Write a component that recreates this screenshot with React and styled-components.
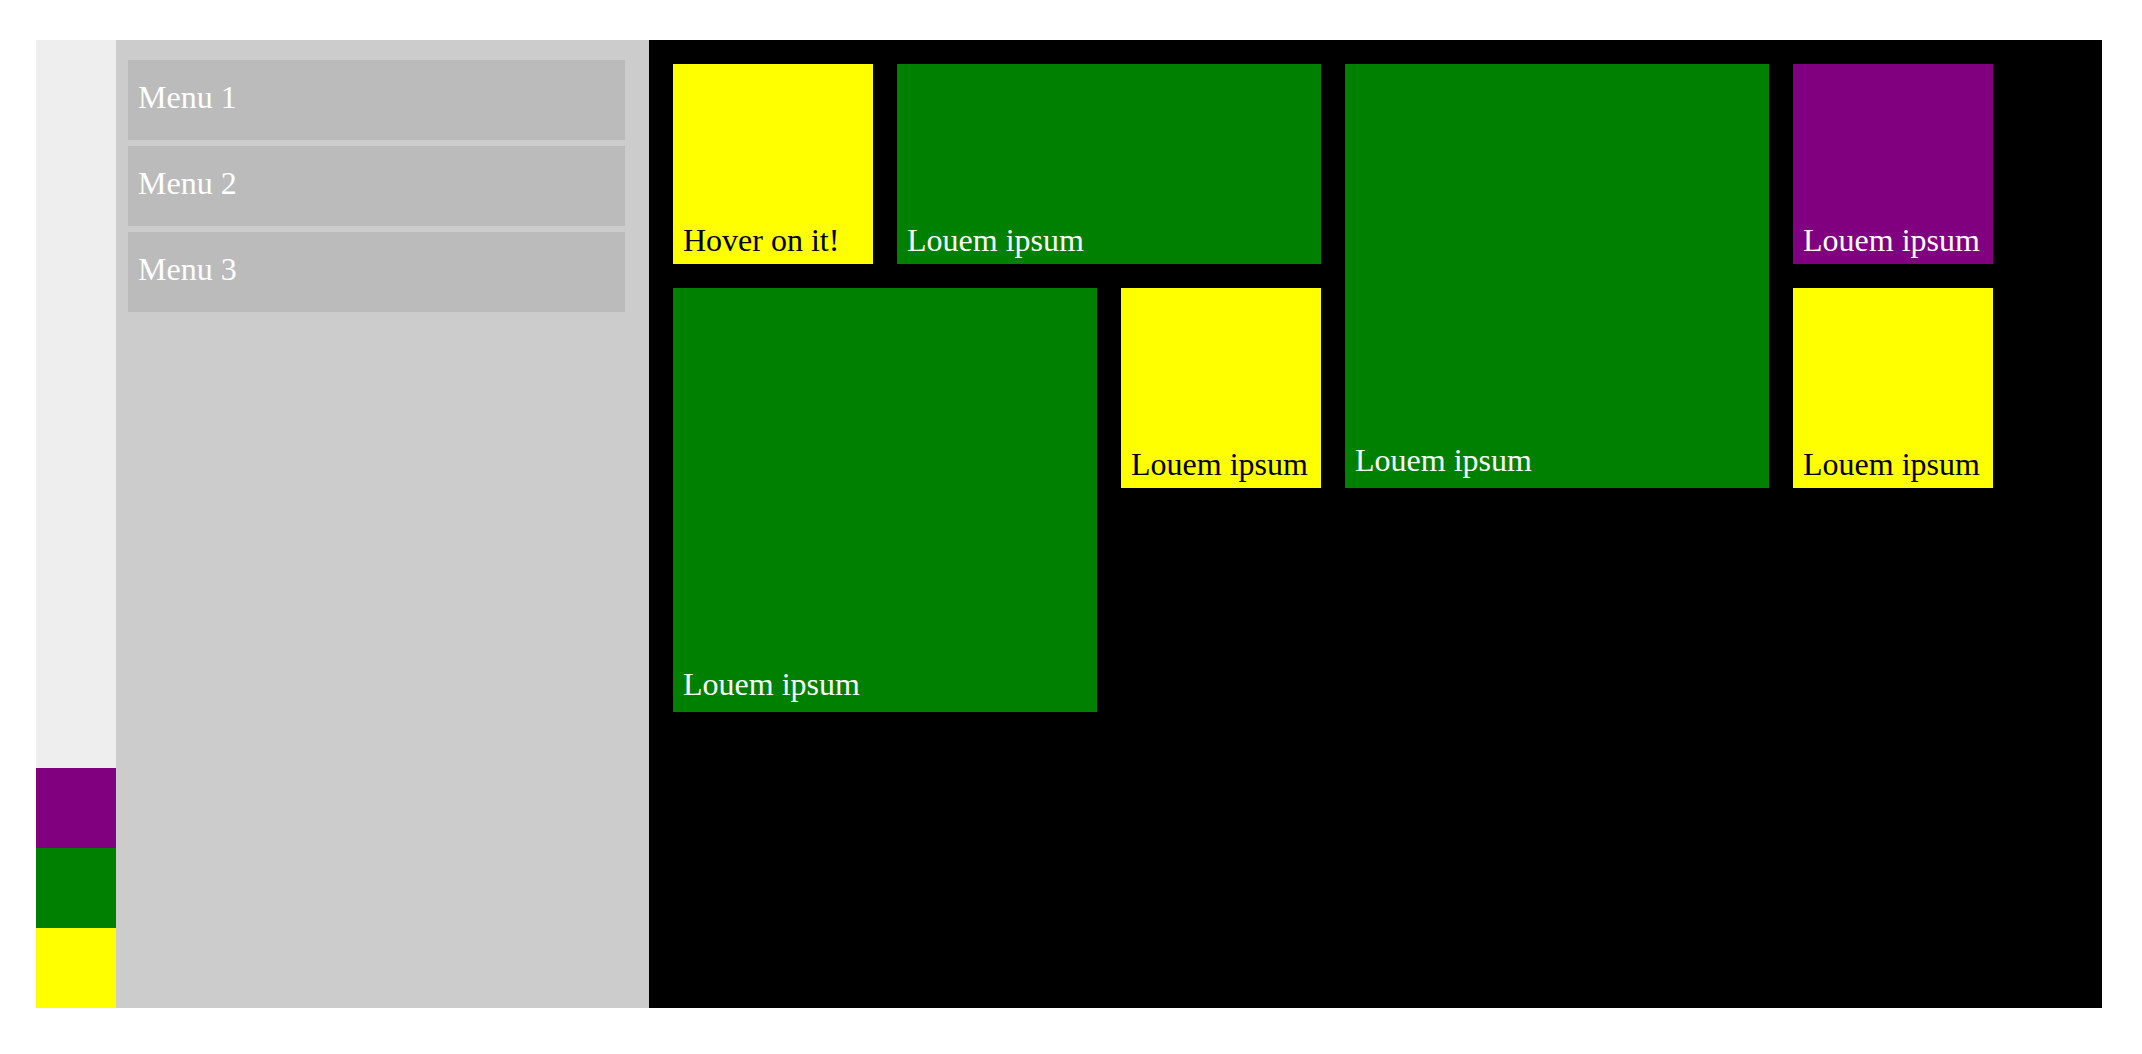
import React from 'react';
import styled, { createGlobalStyle } from 'styled-components';

const GlobalStyle = createGlobalStyle`
  html, body {
    margin: 0;
    padding: 0;
    background: #fff;
  }

  body {
    font-family: "Liberation Serif", "Times New Roman", serif;
  }
`;

const Page = styled.div`
  padding: 40px 40px 46px 36px;
`;

const Layout = styled.div`
  display: flex;
  height: 968px;
`;

const Strip = styled.div`
  width: 80px;
  flex-shrink: 0;
  background: #eee;
  display: flex;
  flex-direction: column;
  justify-content: flex-end;
`;

const Swatch = styled.div`
  width: 80px;
  height: 80px;
  background: ${(p) => p.$color};
`;

const Menu = styled.nav`
  width: 533px;
  flex-shrink: 0;
  box-sizing: border-box;
  padding: 20px 24px 0 12px;
  background: #ccc;
  display: flex;
  flex-direction: column;
  gap: 6px;
`;

const MenuItem = styled.div`
  height: 80px;
  box-sizing: border-box;
  padding: 19px 10px 0;
  background: #bbb;
  color: #fff;
  font-size: 32px;
`;

const Board = styled.main`
  flex: 1;
  background: #000;
  padding: 24px;
  display: grid;
  grid-template-columns: repeat(6, 200px);
  grid-auto-rows: 200px;
  gap: 24px;
  align-content: start;
`;

const Tile = styled.div`
  grid-column: span ${(p) => p.$cols || 1};
  grid-row: span ${(p) => p.$rows || 1};
  background: ${(p) => p.$color};
  color: ${(p) => (p.$color === 'yellow' ? '#000' : '#fff')};
  display: flex;
  flex-direction: column;
  justify-content: flex-end;
  padding: 0 10px ${(p) => (p.$rows === 2 ? 9 : 5)}px;
  font-size: 32px;
  white-space: nowrap;
`;

const tiles = [
  { color: 'yellow', label: 'Hover on it!' },
  { color: 'green', cols: 2 },
  { color: 'green', cols: 2, rows: 2 },
  { color: 'purple' },
  { color: 'green', cols: 2, rows: 2 },
  { color: 'yellow' },
  { color: 'yellow' },
];

const App = () => (
  <Page>
    <GlobalStyle />
    <Layout>
      <Strip>
        <Swatch $color="purple" />
        <Swatch $color="green" />
        <Swatch $color="yellow" />
      </Strip>
      <Menu>
        <MenuItem>Menu 1</MenuItem>
        <MenuItem>Menu 2</MenuItem>
        <MenuItem>Menu 3</MenuItem>
      </Menu>
      <Board>
        {tiles.map((t, i) => (
          <Tile key={i} $color={t.color} $cols={t.cols} $rows={t.rows}>
            {t.label || 'Louem ipsum'}
          </Tile>
        ))}
      </Board>
    </Layout>
  </Page>
);

export default App;
